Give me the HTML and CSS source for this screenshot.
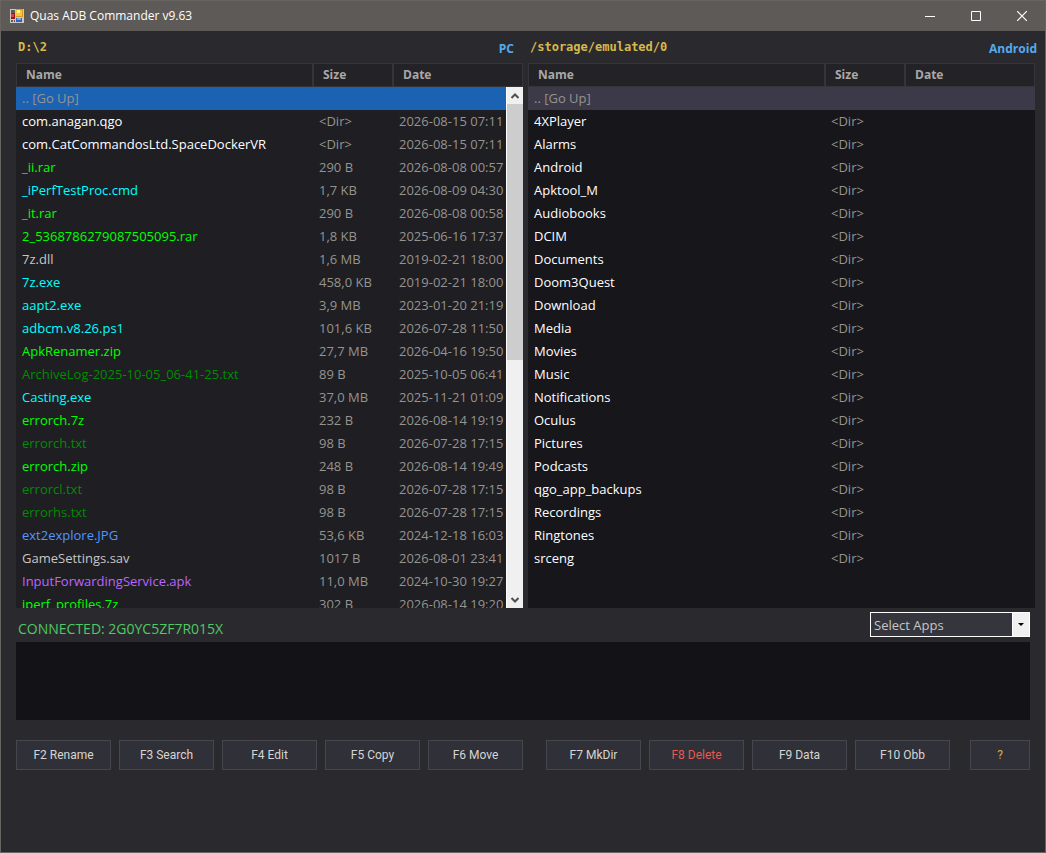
FILE: index.html
```html
<!DOCTYPE html>
<html lang="en">
<head>
<meta charset="utf-8">
<title>Quas ADB Commander v9.63</title>
<link rel="stylesheet" href="styles.css">
</head>
<body>
<div class="window">
  <header class="titlebar">
    <svg class="app-icon" width="14" height="14" viewBox="0 0 14 14" shape-rendering="crispEdges" aria-hidden="true">
      <rect width="14" height="14" fill="#c9c9c9"/>
      <rect x="1" y="1" width="4" height="3" fill="#5e5a57"/>
      <rect x="1" y="11" width="2" height="2" fill="#5e5a57"/>
      <rect x="4" y="11" width="1" height="2" fill="#5e5a57"/>
      <rect x="1" y="4" width="4" height="6" fill="#a01414"/>
      <rect x="1" y="5" width="3" height="3" fill="#e8402e"/>
      <rect x="6" y="0" width="7" height="8" fill="#d89a18"/>
      <rect x="6" y="1" width="6" height="6" fill="#f8c838"/>
      <rect x="7" y="1" width="3" height="3" fill="#fff0a0"/>
      <rect x="6" y="9" width="6" height="4" fill="#2c62c0"/>
      <rect x="7" y="9" width="4" height="2" fill="#78aaf4"/>
    </svg>
    <h1 class="title">Quas ADB Commander v9.63</h1>
    <div class="caption-buttons">
      <button class="caption" aria-label="Minimize"><svg width="10" height="10" viewBox="0 0 10 10"><path d="M0 5.5H10" stroke="#fff"/></svg></button>
      <button class="caption" aria-label="Maximize"><svg width="10" height="10" viewBox="0 0 10 10"><path d="M.5 .5H9.500V9.500H.5Z" fill="none" stroke="#fff"/></svg></button>
      <button class="caption" aria-label="Close"><svg width="10" height="10" viewBox="0 0 10 10"><path d="M0 0L10 10M10 0L0 10" stroke="#fff" stroke-width="1.200"/></svg></button>
    </div>
  </header>
  <main class="content">
    <div class="panes">
      <section class="pane pane-pc">
        <div class="pane-head"><span class="path">D:\2</span><span class="device">PC</span></div>
        <div class="list">
          <table class="files">
            <colgroup><col class="col-name"><col class="col-size"><col></colgroup>
            <thead><tr><th>Name</th><th>Size</th><th>Date</th></tr></thead>
            <tbody>
              <tr class="selected"><td>.. [Go Up]</td><td></td><td></td></tr>
              <tr class="dir"><td>com.anagan.qgo</td><td>&lt;Dir&gt;</td><td>2026-08-15 07:11</td></tr>
              <tr class="dir"><td>com.CatCommandosLtd.SpaceDockerVR</td><td>&lt;Dir&gt;</td><td>2026-08-15 07:11</td></tr>
              <tr class="archive"><td>_ii.rar</td><td>290 B</td><td>2026-08-08 00:57</td></tr>
              <tr class="exec"><td>_iPerfTestProc.cmd</td><td>1,7 KB</td><td>2026-08-09 04:30</td></tr>
              <tr class="archive"><td>_it.rar</td><td>290 B</td><td>2026-08-08 00:58</td></tr>
              <tr class="archive"><td>2_5368786279087505095.rar</td><td>1,8 KB</td><td>2025-06-16 17:37</td></tr>
              <tr class="plain"><td>7z.dll</td><td>1,6 MB</td><td>2019-02-21 18:00</td></tr>
              <tr class="exec"><td>7z.exe</td><td>458,0 KB</td><td>2019-02-21 18:00</td></tr>
              <tr class="exec"><td>aapt2.exe</td><td>3,9 MB</td><td>2023-01-20 21:19</td></tr>
              <tr class="exec"><td>adbcm.v8.26.ps1</td><td>101,6 KB</td><td>2026-07-28 11:50</td></tr>
              <tr class="archive"><td>ApkRenamer.zip</td><td>27,7 MB</td><td>2026-04-16 19:50</td></tr>
              <tr class="text"><td>ArchiveLog-2025-10-05_06-41-25.txt</td><td>89 B</td><td>2025-10-05 06:41</td></tr>
              <tr class="exec"><td>Casting.exe</td><td>37,0 MB</td><td>2025-11-21 01:09</td></tr>
              <tr class="archive"><td>errorch.7z</td><td>232 B</td><td>2026-08-14 19:19</td></tr>
              <tr class="text"><td>errorch.txt</td><td>98 B</td><td>2026-07-28 17:15</td></tr>
              <tr class="archive"><td>errorch.zip</td><td>248 B</td><td>2026-08-14 19:49</td></tr>
              <tr class="text"><td>errorcl.txt</td><td>98 B</td><td>2026-07-28 17:15</td></tr>
              <tr class="text"><td>errorhs.txt</td><td>98 B</td><td>2026-07-28 17:15</td></tr>
              <tr class="image"><td>ext2explore.JPG</td><td>53,6 KB</td><td>2024-12-18 16:03</td></tr>
              <tr class="plain"><td>GameSettings.sav</td><td>1017 B</td><td>2026-08-01 23:41</td></tr>
              <tr class="apk"><td>InputForwardingService.apk</td><td>11,0 MB</td><td>2024-10-30 19:27</td></tr>
              <tr class="archive"><td>iperf_profiles.7z</td><td>302 B</td><td>2026-08-14 19:20</td></tr>
            </tbody>
          </table>
          <div class="scrollbar">
            <button class="scroll-button" aria-label="Scroll up"><svg width="8" height="6" viewBox="0 0 8 6"><path d="M.5 5L4 1.500L7.500 5" fill="none" stroke="#505050" stroke-width="2"/></svg></button>
            <div class="track"><div class="thumb"></div></div>
            <button class="scroll-button" aria-label="Scroll down"><svg width="8" height="6" viewBox="0 0 8 6"><path d="M.5 1L4 4.500L7.500 1" fill="none" stroke="#505050" stroke-width="2"/></svg></button>
          </div>
        </div>
      </section>
      <section class="pane pane-android">
        <div class="pane-head"><span class="path">/storage/emulated/0</span><span class="device">Android</span></div>
        <div class="list">
          <table class="files">
            <colgroup><col class="col-name"><col class="col-size"><col></colgroup>
            <thead><tr><th>Name</th><th>Size</th><th>Date</th></tr></thead>
            <tbody>
              <tr class="selected"><td>.. [Go Up]</td><td></td><td></td></tr>
              <tr class="dir"><td>4XPlayer</td><td>&lt;Dir&gt;</td><td></td></tr>
              <tr class="dir"><td>Alarms</td><td>&lt;Dir&gt;</td><td></td></tr>
              <tr class="dir"><td>Android</td><td>&lt;Dir&gt;</td><td></td></tr>
              <tr class="dir"><td>Apktool_M</td><td>&lt;Dir&gt;</td><td></td></tr>
              <tr class="dir"><td>Audiobooks</td><td>&lt;Dir&gt;</td><td></td></tr>
              <tr class="dir"><td>DCIM</td><td>&lt;Dir&gt;</td><td></td></tr>
              <tr class="dir"><td>Documents</td><td>&lt;Dir&gt;</td><td></td></tr>
              <tr class="dir"><td>Doom3Quest</td><td>&lt;Dir&gt;</td><td></td></tr>
              <tr class="dir"><td>Download</td><td>&lt;Dir&gt;</td><td></td></tr>
              <tr class="dir"><td>Media</td><td>&lt;Dir&gt;</td><td></td></tr>
              <tr class="dir"><td>Movies</td><td>&lt;Dir&gt;</td><td></td></tr>
              <tr class="dir"><td>Music</td><td>&lt;Dir&gt;</td><td></td></tr>
              <tr class="dir"><td>Notifications</td><td>&lt;Dir&gt;</td><td></td></tr>
              <tr class="dir"><td>Oculus</td><td>&lt;Dir&gt;</td><td></td></tr>
              <tr class="dir"><td>Pictures</td><td>&lt;Dir&gt;</td><td></td></tr>
              <tr class="dir"><td>Podcasts</td><td>&lt;Dir&gt;</td><td></td></tr>
              <tr class="dir"><td>qgo_app_backups</td><td>&lt;Dir&gt;</td><td></td></tr>
              <tr class="dir"><td>Recordings</td><td>&lt;Dir&gt;</td><td></td></tr>
              <tr class="dir"><td>Ringtones</td><td>&lt;Dir&gt;</td><td></td></tr>
              <tr class="dir"><td>srceng</td><td>&lt;Dir&gt;</td><td></td></tr>
            </tbody>
          </table>
        </div>
      </section>
    </div>
    <div class="lower">
      <div class="status-row">
        <span class="status">CONNECTED: 2G0YC5ZF7R015X</span>
        <div class="combo">
          <select class="combo-select" aria-label="Select Apps"><option>Select Apps</option></select>
          <span class="combo-arrow" aria-hidden="true"><svg width="6" height="3" viewBox="0 0 6 3"><path d="M0 0H6L3 3Z" fill="#000"/></svg></span>
        </div>
      </div>
      <div class="log" role="log"></div>
      <div class="actions">
        <div class="group">
          <button class="action">F2 Rename</button>
          <button class="action">F3 Search</button>
          <button class="action">F4 Edit</button>
          <button class="action">F5 Copy</button>
          <button class="action">F6 Move</button>
        </div>
        <div class="group">
          <button class="action">F7 MkDir</button>
          <button class="action danger">F8 Delete</button>
          <button class="action">F9 Data</button>
          <button class="action">F10 Obb</button>
        </div>
        <button class="action help">?</button>
      </div>
    </div>
  </main>
</div>
</body>
</html>
```
FILE: styles.css
```css
* { box-sizing: border-box; }
body {
  margin: 0;
  background: #2a2a2e;
  font: 13px/18px "Open Sans", "Noto Sans", sans-serif;
}
button { font: inherit; padding: 0; border: 0; }

.window {
  display: flex;
  flex-direction: column;
  height: 100vh;
  border: 1px solid #686561;
  background: #2a2a2e;
}
.titlebar {
  flex: none;
  display: flex;
  align-items: center;
  height: 30px;
  padding-left: 9px;
  background: #5e5a57;
}
.app-icon { flex: none; }
.title {
  flex: 1;
  margin: 0 0 0 6px;
  color: #fff;
  font: 12px/18px "Open Sans", sans-serif;
}
.caption-buttons { display: flex; }
.caption {
  display: grid;
  place-items: center;
  width: 46px;
  height: 30px;
  background: none;
}

.content {
  flex: 1;
  min-height: 0;
  display: flex;
  flex-direction: column;
  padding: 0 10px 82px 15px;
}
.panes { flex: 1; min-height: 0; display: flex; gap: 5px; }
.pane { flex: 1; min-width: 0; display: flex; flex-direction: column; }
.pane-head {
  flex: none;
  display: flex;
  justify-content: space-between;
  height: 32px;
  padding: 7px 0 0 2px;
}
.pane-pc .pane-head { padding-right: 9px; }
.path { color: #d7b94b; font: bold 12px/18px "DejaVu Sans Mono", monospace; }
.device { color: #55aaeb; font: bold 12px/22px "Open Sans", sans-serif; }
.pane-android .device { margin-right: -2px; }

.list { position: relative; flex: 1; min-height: 0; overflow: hidden; }
.pane-pc .list { background: #1e1e23; }
.pane-android .list { background: #16161b; }

.files { width: 100%; border-collapse: separate; border-spacing: 0; table-layout: fixed; }
.col-name { width: 298px; }
.col-size { width: 80px; }
.files th {
  height: 24px;
  padding: 0 0 0 9px;
  border: solid #34343a;
  border-width: 1px 2px 1px 0;
  background: #222227;
  color: #aaa8a5;
  font: bold 12px/18px "Open Sans", sans-serif;
  text-align: left;
}
.files th:first-child { border-left-width: 1px; }
.files th:last-child { border-right-width: 1px; }
.files td {
  height: 23px;
  padding: 0 0 2px 5px;
  color: #96948f;
  line-height: 18px;
  white-space: nowrap;
}
.files td:first-child { padding-left: 6px; }
.files .dir td:first-child { color: #fff; }
.files .plain td:first-child { color: #c8c6c3; }
.files .archive td:first-child { color: #00ff00; }
.files .exec td:first-child { color: #00ffff; }
.files .text td:first-child { color: #008c00; }
.files .image td:first-child { color: #5096ff; }
.files .apk td:first-child { color: #be64ff; }
.pane-pc .selected { background: #1c62b3; }
.pane-android .selected { background: #3c3a48; }

.scrollbar {
  position: absolute;
  top: 24px;
  right: 0;
  bottom: 0;
  width: 17px;
  display: flex;
  flex-direction: column;
  border-left: 1px solid #fff;
  background: #f0f0f0;
}
.scroll-button { height: 17px; display: grid; place-items: center; background: #f0f0f0; }
.track { flex: 1; }
.thumb { height: 52.5%; background: #cdcdcd; }

.lower { flex: none; padding-right: 5px; }
.status-row {
  display: flex;
  justify-content: space-between;
  align-items: center;
  height: 34px;
  padding-left: 2px;
}
.status { padding-top: 8px; color: #50c864; font-size: 14px; }
.combo { position: relative; width: 160px; height: 25px; margin-bottom: 2px; }
.combo-select {
  appearance: none;
  width: 100%;
  height: 100%;
  padding: 2px 20px 0 3px;
  border: 1px solid #fff;
  border-radius: 0;
  background: #35353d;
  color: #c8c6c3;
  font: inherit;
}
.combo-arrow {
  position: absolute;
  top: 0;
  right: 0;
  display: grid;
  place-items: center;
  width: 18px;
  height: 100%;
  border: 1px solid #fff;
  background: #f0f0f0;
  pointer-events: none;
}
.log { height: 78px; background: #121217; }

.actions { display: flex; margin-top: 20px; }
.group { flex: 5 1 32px; display: flex; gap: 8px; }
.group + .group { flex: 4 1 24px; margin-left: 23px; }
.action {
  flex: 1 1 0;
  height: 30px;
  border: 1px solid #46464e;
  background: #303038;
  color: #d7d5d2;
  font: 12px/16px Roboto, sans-serif;
}
.action.danger { color: #e65a50; }
.action.help { flex: none; width: 60px; margin-left: 20px; color: #d2af46; }
```
